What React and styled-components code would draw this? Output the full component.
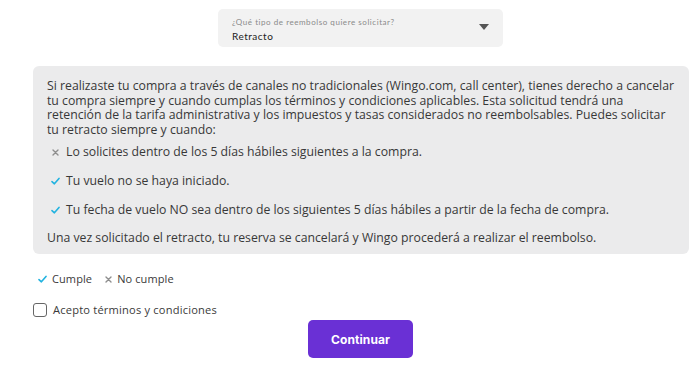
import React from "react";
import styled, { createGlobalStyle } from "styled-components";

const Global = createGlobalStyle`
  html, body { margin: 0; padding: 0; background: #ffffff; }
  body { font-family: "Open Sans", "Liberation Sans", sans-serif; color: #3c3c3c; }
  * { box-sizing: border-box; }
`;

const Page = styled.div`
  width: 700px;
  height: 375px;
  padding-top: 9px;
  display: flex;
  flex-direction: column;
  overflow: hidden;
`;

const Select = styled.div`
  margin-left: 218px;
  width: 285px;
  height: 38px;
  background: #f2f2f2;
  border-radius: 5px;
  display: flex;
  align-items: center;
  justify-content: space-between;
  padding: 0 14px 0 14px;
`;

const SelectText = styled.div`
  display: flex;
  flex-direction: column;
  gap: 2px;
  padding-top: 3px;
`;

const SelectLabel = styled.span`
  font-family: Lato, "Open Sans", sans-serif;
  font-size: 8px;
  letter-spacing: 0.55px;
  color: #8a8a8a;
  line-height: 11px;
`;

const SelectValue = styled.span`
  font-family: Lato, "Open Sans", sans-serif;
  font-size: 10px;
  letter-spacing: 0.5px;
  color: #222;
  line-height: 13px;
`;

const Caret = styled.svg`
  width: 10px;
  height: 6px;
  margin-top: -2px;
`;

const Panel = styled.div`
  margin: 19px 11px 0 33px;
  background: #ebebec;
  border-radius: 6px;
  padding: 13px 14px 9px 14px;
  font-size: 12.25px;
  line-height: 14.5px;
  color: #383838;
`;

const Para = styled.p`
  margin: 0;
`;

const List = styled.ul`
  list-style: none;
  margin: 8px 0 13px 0;
  padding: 0;
  display: flex;
  flex-direction: column;
  gap: 14.5px;
`;

const Item = styled.li`
  display: flex;
  align-items: center;
  gap: ${(p) => p.$gap || 6}px;
  padding-left: ${(p) => p.$indent || 0}px;
`;

const Legend = styled.div`
  margin: 17px 0 0 38px;
  display: flex;
  align-items: center;
  gap: 13px;
  font-size: 11px;
  line-height: 16px;
  letter-spacing: 0.1px;
  color: #3a3a3a;
`;

const LegendItem = styled.span`
  display: flex;
  align-items: center;
  gap: 5px;
`;

const TermsRow = styled.label`
  margin: 15px 0 0 33px;
  display: flex;
  align-items: center;
  gap: 6px;
  font-size: 11.1px;
  line-height: 16px;
  letter-spacing: 0.2px;
  color: #3a3a3a;
`;

const Box = styled.span`
  width: 14px;
  height: 14px;
  border: 1px solid #666;
  border-radius: 3px;
  background: #fff;
`;

const Button = styled.button`
  margin: 2px 0 0 308px;
  width: 105px;
  height: 38px;
  border: none;
  border-radius: 5px;
  background: #6a30d5;
  color: #fff;
  font-family: Inter, "Open Sans", sans-serif;
  font-weight: 700;
  font-size: 12px;
  letter-spacing: 0.1px;
`;

const Check = () => (
  <svg width="9" height="8" viewBox="0 0 9 8">
    <path d="M1 4.6 L3.4 6.8 L8 1.4" fill="none" stroke="#22b3e0" strokeWidth="1.6" strokeLinecap="round" strokeLinejoin="round" />
  </svg>
);

const Cross = () => (
  <svg width="7" height="7" viewBox="0 0 7 7">
    <path d="M1 1 L6 6 M6 1 L1 6" fill="none" stroke="#8e8e8e" strokeWidth="1.4" strokeLinecap="round" />
  </svg>
);

export default function App() {
  return (
    <>
      <Global />
      <Page>
        <Select>
          <SelectText>
            <SelectLabel>¿Qué tipo de reembolso quiere solicitar?</SelectLabel>
            <SelectValue>Retracto</SelectValue>
          </SelectText>
          <Caret viewBox="0 0 10 6">
            <path d="M0 0 L10 0 L5 6 Z" fill="#555" />
          </Caret>
        </Select>
        <Panel>
          <Para>
            Si realizaste tu compra a través de canales no tradicionales (Wingo.com, call center), tienes derecho a cancelar
            tu compra siempre y cuando cumplas los términos y condiciones aplicables. Esta solicitud tendrá una
            retención de la tarifa administrativa y los impuestos y tasas considerados no reembolsables. Puedes solicitar
            tu retracto siempre y cuando:
          </Para>
          <List>
            <Item $indent={5} $gap={7}><Cross />Lo solicites dentro de los 5 días hábiles siguientes a la compra.</Item>
            <Item $indent={4} $gap={6}><Check />Tu vuelo no se haya iniciado.</Item>
            <Item $indent={4} $gap={6}><Check />Tu fecha de vuelo NO sea dentro de los siguientes 5 días hábiles a partir de la fecha de compra.</Item>
          </List>
          <Para>Una vez solicitado el retracto, tu reserva se cancelará y Wingo procederá a realizar el reembolso.</Para>
        </Panel>
        <Legend>
          <LegendItem><Check />Cumple</LegendItem>
          <LegendItem><Cross />No cumple</LegendItem>
        </Legend>
        <TermsRow>
          <Box />
          Acepto términos y condiciones
        </TermsRow>
        <Button>Continuar</Button>
      </Page>
    </>
  );
}
